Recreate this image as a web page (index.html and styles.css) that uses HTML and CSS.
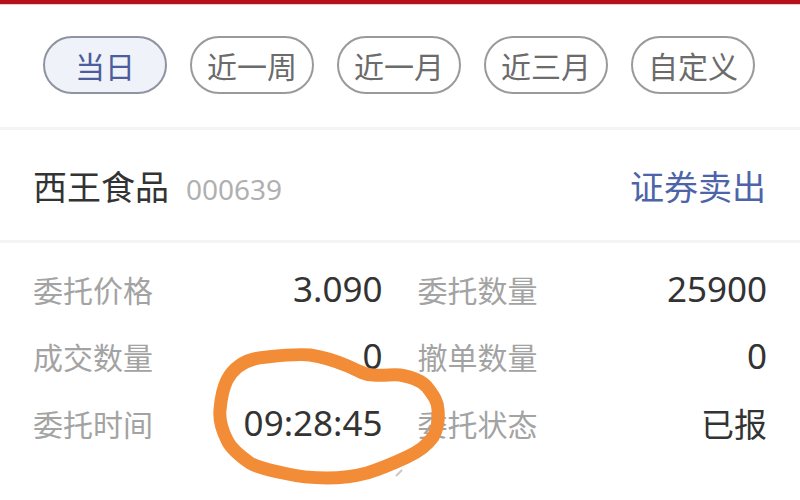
FILE: index.html
```html
<!DOCTYPE html>
<html lang="zh-CN">
<head>
<meta charset="utf-8">
<title>委托详情</title>
<link rel="stylesheet" href="styles.css">
</head>
<body>
<div class="page">
  <div class="topbar"></div>
  <div class="tabs">
    <div class="pill active">当日</div>
    <div class="pill">近一周</div>
    <div class="pill">近一月</div>
    <div class="pill">近三月</div>
    <div class="pill">自定义</div>
  </div>
  <div class="divider"></div>
  <div class="stock">
    <div class="name">西王食品<span class="code">000639</span></div>
    <div class="action">证券卖出</div>
  </div>
  <div class="divider"></div>
  <div class="details">
    <div class="item"><span class="label">委托价格</span><span class="value">3.090</span></div>
    <div class="item"><span class="label">委托数量</span><span class="value">25900</span></div>
    <div class="item"><span class="label">成交数量</span><span class="value">0</span></div>
    <div class="item"><span class="label">撤单数量</span><span class="value">0</span></div>
    <div class="item"><span class="label">委托时间</span><span class="value">09:28:45</span></div>
    <div class="item"><span class="label">委托状态</span><span class="value cjk">已报</span></div>
  </div>
  <svg class="mark" width="800" height="500" viewBox="0 0 800 500">
    <path d="M402 470 L396 476" stroke="#c8c8c8" stroke-width="2" fill="none"/>
    <path d="M227 380 C235 365 250 358 267 357 C285 355 300 354 310 355 C330 358 340 363 350 367 C360 372 366 375 373 375 C385 376 392 374 400 375 C412 377 422 381 427 387 C434 396 438 402 438 410 C439 420 437 430 433 437 C426 447 418 452 407 457 C392 464 380 469 367 473 C352 477 340 478 327 478 C310 478 296 476 283 473 C270 470 258 468 250 463 C240 456 231 449 227 440 C222 430 219 420 220 410 C221 398 223 388 227 380 Z" stroke="#f28c36" stroke-width="13" fill="none" stroke-linejoin="round"/>
  </svg>
</div>
</body>
</html>
```
FILE: styles.css
```css
* { box-sizing: border-box; }
html, body { margin: 0; padding: 0; background: #fff; }
body {
  font-family: "Noto Sans CJK SC", "Noto Sans", sans-serif;
  width: 800px;
  height: 500px;
  overflow: hidden;
}
.page { position: relative; width: 800px; height: 500px; }
.topbar {
  height: 5px;
  background: #b3121d;
  border-bottom: 1px solid #f2c7cb;
}
.tabs {
  display: flex;
  gap: 23px;
  padding: 31px 0 33px 43px;
}
.pill {
  width: 124px;
  height: 58px;
  border: 2px solid #9a9a9a;
  border-radius: 29px;
  display: flex;
  align-items: center;
  justify-content: center;
  font-size: 30px;
  color: #6b6b6b;
  line-height: 1;
}
.pill.active {
  background: #eff2f8;
  border-color: #8f94a2;
  color: #4b5d9c;
}
.divider { height: 3px; background: #f4f4f4; }
.stock {
  height: 110px;
  display: flex;
  align-items: center;
  justify-content: space-between;
  padding: 0 34px 0 33px;
}
.name {
  font-size: 34px;
  color: #333;
  display: flex;
  align-items: baseline;
}
.code {
  font-family: "Noto Sans", sans-serif;
  font-size: 28px;
  color: #b0b0b0;
  margin-left: 17px;
}
.action {
  font-size: 34px;
  color: #4d65a8;
}
.details {
  display: grid;
  grid-template-columns: 1fr 1fr;
  column-gap: 35px;
  padding: 12px 33px 0 33px;
}
.item {
  height: 67px;
  display: flex;
  align-items: center;
  justify-content: space-between;
}
.label {
  font-size: 30px;
  color: #a3a3a3;
}
.value {
  font-family: "Noto Sans", "Noto Sans CJK SC", sans-serif;
  font-size: 35px;
  color: #333;
}
.value.cjk {
  font-family: "Noto Sans CJK SC", sans-serif;
  font-size: 33px;
}
.mark {
  position: absolute;
  left: 0;
  top: 0;
  pointer-events: none;
}
```
